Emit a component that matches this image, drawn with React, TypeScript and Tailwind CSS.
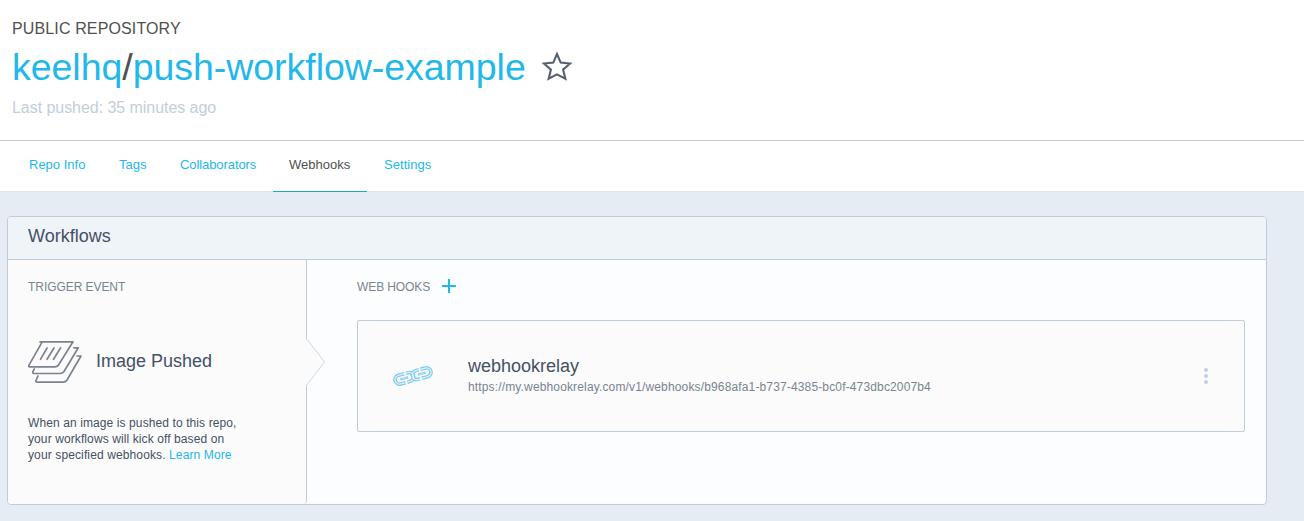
import React from "react";

const tabs = [
  { name: "Repo Info", left: "ml-[13px]", width: "w-[89px]", active: false },
  { name: "Tags", left: "ml-[1px]", width: "w-[60px]", active: false },
  { name: "Collaborators", left: "ml-[1px]", width: "w-[108px] tracking-[-0.08px]", active: false },
  { name: "Webhooks", left: "ml-[1px]", width: "w-[94px]", active: true },
  { name: "Settings", left: "ml-[1px]", width: "w-[80px] tracking-[0.05px]", active: false },
];

function Star() {
  return (
    <svg width="32" height="32" viewBox="0 0 32 32" className="ml-[15px] mt-[11px]" fill="none" stroke="#556070" strokeWidth="2.1">
      <path d="M16 3 L19.7 11.6 L29 12.5 L22.1 18.7 L24.4 27.8 L16 23.4 L7.6 27.8 L9.9 18.7 L3 12.5 L12.3 11.6 Z" />
    </svg>
  );
}

function Layers() {
  return (
    <svg width="54" height="44" viewBox="0 0 54 44" fill="none" stroke="#7a8491" strokeWidth="1.7" strokeLinejoin="round" strokeLinecap="round">
      <path d="M12 1.8 H45 L30.5 25 Q29.3 26.8 27 26.8 H1.5 Q0.3 26.8 1 25.2 L14.2 1.8" />
      <path d="M46 7.8 H50.3 L36 31.5 Q34.6 33.5 32 33.5 H5.5 Q4.3 33.4 5 31.4 L6.3 29" />
      <path d="M49 16 H53 L39 40 Q37.6 42.2 35 42.2 H9 Q7.4 42 8 40.4 L10 36" />
      <path d="M19 8 L12.5 19.3 M26 8 L19 19.3 M32.5 8 L25.5 19.3" />
    </svg>
  );
}

function Chain() {
  return (
    <svg width="40" height="22" viewBox="0 0 40 22" fill="none">
      <g transform="translate(20 11) rotate(-15)">
        <g stroke="#7acbed" strokeWidth="3.6">
          <path d="M-8 -4.5 H-14 A4.5 4.5 0 0 0 -14 4.5 H-9 M-6 -4.5 H-4 A4.5 4.5 0 0 1 -4 4.5 H-7" />
          <path d="M8 4.5 H14 A4.5 4.5 0 0 0 14 -4.5 H9 M6 4.5 H4 A4.5 4.5 0 0 1 4 -4.5 H7" />
          <path d="M-13 0 H-5 M5 0 H13" strokeWidth="2.4" />
        </g>
        <g stroke="#dff2fa" strokeWidth="1.3">
          <path d="M-8 -4.5 H-14 A4.5 4.5 0 0 0 -14 4.5 H-9 M-6 -4.5 H-4 A4.5 4.5 0 0 1 -4 4.5 H-7" />
          <path d="M8 4.5 H14 A4.5 4.5 0 0 0 14 -4.5 H9 M6 4.5 H4 A4.5 4.5 0 0 1 4 -4.5 H7" />
          <path d="M-12 0 H-6 M6 0 H12" strokeWidth="0.7" />
        </g>
      </g>
    </svg>
  );
}

export default function App() {
  return (
    <div className="h-[521px] w-full overflow-hidden bg-[#e5ecf4] font-['Liberation_Sans',Arial,sans-serif]">
      <header className="h-[141px] border-b border-[#c0c9d4] bg-white pl-3 pt-[17px]">
        <div className="h-[23px] text-base leading-6 tracking-[0.13px] text-[#505050]">PUBLIC REPOSITORY</div>
        <div className="flex h-[54px] items-start">
          <h1 className="text-[37.5px] leading-[54px] tracking-[-0.04px] text-[#505050]">
            <a className="text-[#22b8eb]">keelhq</a>/<a className="text-[#22b8eb]">push-workflow-example</a>
          </h1>
          <Star />
        </div>
        <div className="text-base leading-[27px] tracking-[-0.05px] text-[#c4cdda]">Last pushed: 35 minutes ago</div>
      </header>

      <nav className="flex h-[51px] border-b border-[#dfe7ed] bg-white text-[13px] leading-[48px]">
        {tabs.map((t) => (
          <a
            key={t.name}
            className={`${t.left} ${t.width} h-[51px] whitespace-nowrap px-4 ${t.active ? "border-b border-b-[#22a5d0] text-[#505050]" : "text-[#22b8eb]"}`}
          >
            {t.name}
          </a>
        ))}
      </nav>

      <section className="ml-[7px] mt-6 flex h-[289px] w-[1260px] flex-col overflow-hidden rounded-[4px] border border-[#c0cbdb] bg-[#fcfdff]">
        <h2 className="h-[43px] shrink-0 border-b border-[#c0cbdb] bg-[#eff4f8] pl-5 text-lg leading-[38px] text-[#445066]">Workflows</h2>
        <div className="flex flex-1">
          <aside className="relative w-[299px] rounded-br-[4px] border-r border-[#c0cbdb] bg-[#fbfbfb] pl-5 pt-[18px]">
            <div className="text-xs leading-[18px] tracking-[-0.06px] text-[#7a8491]">TRIGGER EVENT</div>
            <div className="mt-[44px] flex h-[44px] items-start">
              <Layers />
              <span className="ml-[14px] text-lg leading-[42px] text-[#445066]">Image Pushed</span>
            </div>
            <p className="mt-[31px] text-xs leading-4 text-[#445066]">
              <span className="tracking-[0.1px]">When an image is pushed to this repo,</span>
              <br />
              <span className="tracking-[0.1px]">your workflows will kick off based on</span>
              <br />
              <span className="tracking-[0.12px]">your specified webhooks. <a className="text-[#22b8eb]">Learn More</a></span>
            </p>
            <svg className="absolute -right-[20px] top-[77px]" width="21" height="50" viewBox="0 0 21 50" fill="none">
              <path d="M0 1 H1 L19.5 25 L1 49 H0 Z" fill="#fbfbfb" />
              <path d="M1 1 L19.5 25 L1 49" stroke="#d0d6e5" />
            </svg>
          </aside>
          <main className="flex-1 pl-[50px] pr-[21px] pt-[18px]">
            <div className="flex h-[18px] text-xs leading-[18px] text-[#7a8491]">
              <span className="w-[73px] whitespace-nowrap tracking-[-0.1px]">WEB HOOKS</span>
              <svg className="ml-3 mt-[1px]" width="14" height="14" viewBox="0 0 14 14" stroke="#22b8eb" strokeWidth="2">
                <path d="M0 7 H14 M7 0 V14" />
              </svg>
            </div>
            <div className="mt-6 flex h-[112px] items-center rounded-[2px] border border-[#c0cbdb] bg-[#fbfbfb] pl-[35px] pr-[36px]">
              <Chain />
              <div className="ml-[35px] flex-1">
                <div className="text-lg leading-[22px] text-[#445066]">webhookrelay</div>
                <div className="text-xs leading-5 tracking-[0.146px] text-[#7a8491]">https://my.webhookrelay.com/v1/webhooks/b968afa1-b737-4385-bc0f-473dbc2007b4</div>
              </div>
              <svg width="4" height="16" viewBox="0 0 4 16" fill="#c4cddd">
                <circle cx="2" cy="2" r="2" />
                <circle cx="2" cy="8" r="2" />
                <circle cx="2" cy="14" r="2" />
              </svg>
            </div>
          </main>
        </div>
      </section>
    </div>
  );
}
